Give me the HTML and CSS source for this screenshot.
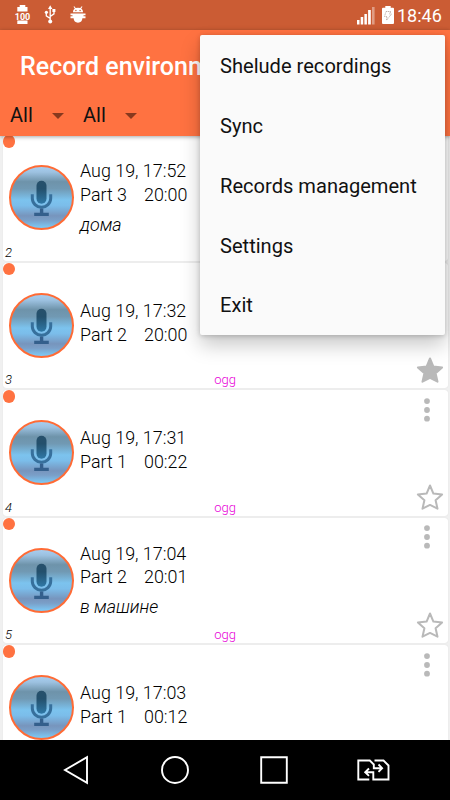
FILE: index.html
```html
<!DOCTYPE html>
<html lang="en">
<head>
    <meta charset="UTF-8">
    <meta name="viewport" content="width=device-width, initial-scale=1.0">
    <title>Record environment</title>
    <link rel="stylesheet" href="styles.css">
</head>
<body>

    <!-- Shared icons -->
    <svg class="defs" width="0" height="0">
        <defs>
            <linearGradient id="sky" x1="0" y1="0" x2="0" y2="1">
                <stop offset="0" stop-color="#a9d0f3"/>
                <stop offset="0.1" stop-color="#9cc1e0"/>
                <stop offset="0.25" stop-color="#6e93aa"/>
                <stop offset="0.36" stop-color="#7199b3"/>
                <stop offset="0.54" stop-color="#7cc3ee"/>
                <stop offset="0.63" stop-color="#7bbdea"/>
                <stop offset="0.79" stop-color="#7795bd"/>
                <stop offset="0.86" stop-color="#7a9fc8"/>
                <stop offset="0.97" stop-color="#7cc6f2"/>
            </linearGradient>
            <linearGradient id="micBody" x1="0" y1="0" x2="0" y2="1">
                <stop offset="0" stop-color="#27506b"/>
                <stop offset="0.35" stop-color="#24506c"/>
                <stop offset="1" stop-color="#2f78a6"/>
            </linearGradient>
            <symbol id="mic" viewBox="0 0 65 65">
                <circle cx="32.5" cy="32.5" r="31.5" fill="url(#sky)" stroke="#ff6b35" stroke-width="2"/>
                <rect x="27.5" y="15.7" width="10" height="23" rx="5" fill="url(#micBody)"/>
                <path d="M23.3 29.300v4a9.2 9 0 0 0 18.4 0v-4" fill="none" stroke="#37709c" stroke-width="3"/>
                <path d="M30.9 43.5h3.4v4.2h5.5v3.3H25.2v-3.3h5.7z" fill="#345f8c"/>
            </symbol>
            <symbol id="star" viewBox="0 0 28 28">
                <path d="M14 2.5l3.4 8.1 8.7.8-6.5 5.8 1.9 8.5L14 21.9l-7.5 3.8 1.9-8.5-6.5-5.8 8.7-.8z" stroke="#b9b9b9" stroke-width="2" stroke-linejoin="round"/>
            </symbol>
            <symbol id="dots" viewBox="0 0 6 24">
                <circle cx="3" cy="3.1" r="2.9"/>
                <circle cx="3" cy="12" r="2.9"/>
                <circle cx="3" cy="20.7" r="2.9"/>
            </symbol>
        </defs>
    </svg>

    <!-- Status bar -->
    <div class="status-bar">
        <svg class="usb" width="60" height="30" viewBox="0 0 60 30">
            <path d="M19.7 5h5.6v2h2.2v4.5H17.3V7h2.4zM17.3 20.5h10.2V24H17.3z" fill="#fff"/>
            <text class="charge-text" x="14.800" y="19.500">100</text>
            <path d="M50.2 8v13M46.3 12.5v3.3l3.9 2.7M54 10.5v3.3l-3.8 2.7" fill="none" stroke="#fff" stroke-width="1.3"/>
            <path d="M50.2 5.3l2.200 3.600H48zM52.400 9h3v3h-3z" fill="#fff"/>
            <circle cx="46.400" cy="12.300" r="1.600" fill="#fff"/>
            <circle cx="50.200" cy="21.500" r="2" fill="#fff"/>
        </svg>
        <svg class="android" width="16" height="18" viewBox="0 0 16 18">
            <path d="M3 6.300c0-1.700.7-3 1.800-3.800L3.500.8l.8-.5 1.400 1.800a6.500 6.500 0 0 1 4.600 0L11.700.3l.8.5-1.300 1.700C12.300 3.300 13 4.600 13 6.300zM.5 7.500h15v1.800h-2v1h2v2h-3.100A4.800 4.800 0 0 1 8 16.800a4.800 4.800 0 0 1-4.400-4.500H.5v-2h2v-1h-2z" fill="#fff"/>
            <circle cx="5.900" cy="4.500" r=".7" fill="#cb5c34"/>
            <circle cx="10.100" cy="4.500" r=".7" fill="#cb5c34"/>
        </svg>
        <svg class="signal" width="19" height="19" viewBox="0 0 19 19" fill="#fff">
            <path d="M0 14h2.500v4.500H0zM3.700 11h2.500v7.500H3.700zM7.400 8h2.500v10.500H7.400zM11.100 4h2.700v14.500h-2.700z"/>
            <path d="M15 1h2.600v17.500H15z" opacity=".4"/>
        </svg>
        <svg class="battery" width="12" height="18" viewBox="0 0 12 18">
            <path d="M3.300 0h5.400v1.700H11a1 1 0 0 1 1 1V17a1 1 0 0 1-1 1H1a1 1 0 0 1-1-1V2.700a1 1 0 0 1 1-1h2.300z" fill="#fff"/>
            <path d="M4 5.500h4.800L7.500 8h2L4.500 14.300 5 10.500H2.500z" fill="none" stroke="#b9a9a3" stroke-width=".9" stroke-dasharray="1.200 .6"/>
        </svg>
        <span class="clock">18:46</span>
    </div>

    <!-- Header -->
    <div class="header">
        <h1>Record environment</h1>
        <div class="filters">
            <span>All</span>
            <span>All</span>
        </div>
    </div>

    <!-- Records -->
    <div class="records">
        <div class="card">
            <span class="mark"></span>
            <svg class="mic"><use href="#mic"/></svg>
            <div class="info has-note">
                <p>Aug 19, 17:52</p>
                <p><span class="part">Part 3</span>20:00</p>
                <p class="note">дома</p>
            </div>
            <span class="number">2</span>
            <svg class="dots"><use href="#dots"/></svg>
            <svg class="star"><use href="#star"/></svg>
        </div>
        <div class="card">
            <span class="mark"></span>
            <svg class="mic"><use href="#mic"/></svg>
            <div class="info">
                <p>Aug 19, 17:32</p>
                <p><span class="part">Part 2</span>20:00</p>
            </div>
            <span class="number">3</span>
            <span class="format">ogg</span>
            <svg class="dots"><use href="#dots"/></svg>
            <svg class="star full"><use href="#star"/></svg>
        </div>
        <div class="card">
            <span class="mark"></span>
            <svg class="mic"><use href="#mic"/></svg>
            <div class="info">
                <p>Aug 19, 17:31</p>
                <p><span class="part">Part 1</span>00:22</p>
            </div>
            <span class="number">4</span>
            <span class="format">ogg</span>
            <svg class="dots"><use href="#dots"/></svg>
            <svg class="star"><use href="#star"/></svg>
        </div>
        <div class="card">
            <span class="mark"></span>
            <svg class="mic"><use href="#mic"/></svg>
            <div class="info has-note">
                <p>Aug 19, 17:04</p>
                <p><span class="part">Part 2</span>20:01</p>
                <p class="note">в машине</p>
            </div>
            <span class="number">5</span>
            <span class="format">ogg</span>
            <svg class="dots"><use href="#dots"/></svg>
            <svg class="star"><use href="#star"/></svg>
        </div>
        <div class="card">
            <span class="mark"></span>
            <svg class="mic"><use href="#mic"/></svg>
            <div class="info">
                <p>Aug 19, 17:03</p>
                <p><span class="part">Part 1</span>00:12</p>
            </div>
            <svg class="dots"><use href="#dots"/></svg>
        </div>
    </div>

    <!-- Navigation bar -->
    <div class="nav-bar">
        <svg viewBox="0 0 36 36"><path d="M29 5.200v25.600L7 18z"/></svg>
        <svg viewBox="0 0 36 36"><circle cx="18" cy="18" r="13"/></svg>
        <svg viewBox="0 0 36 36"><path d="M5.200 5.200h25.600v25.600H5.200z"/></svg>
        <svg viewBox="0 0 36 36">
            <path d="M14.300 27.500H3.300V8.500h11.500l4 4v3.700h8M19.500 8.500h9l5 5v14H18.300v-7.300H10.500M23.500 12.500l3.600 3.700-3.600 3.600M14 16.500l-3.800 3.700 3.800 3.700"/>
        </svg>
    </div>

    <!-- Overflow menu -->
    <div class="menu">
        <a>Shelude recordings</a>
        <a>Sync</a>
        <a>Records management</a>
        <a>Settings</a>
        <a>Exit</a>
    </div>

</body>
</html>
```
FILE: styles.css
```css
* {
    margin: 0;
    padding: 0;
    box-sizing: border-box;
}

body {
    font-family: Roboto, sans-serif;
    width: 450px;
    height: 800px;
    display: flex;
    flex-direction: column;
    background-color: #eeeeee;
    overflow: hidden;
    position: relative;
}

.defs {
    position: absolute;
}

/* Status bar */
.status-bar {
    height: 30px;
    flex: none;
    display: flex;
    align-items: center;
    background-color: #cb5c34;
    color: white;
}

.usb {
    flex: none;
}

.charge-text {
    font-size: 9px;
    font-weight: 700;
    fill: white;
}

.android {
    margin-left: 9.5px;
}

.signal {
    margin-left: auto;
}

.battery {
    margin: 0 3px 0 6px;
}

.clock {
    width: 53px;
    font-size: 18px;
    line-height: 30px;
    padding-top: 2px;
}

/* Header */
.header {
    height: 106px;
    flex: none;
    background-color: #ff7241;
    box-shadow: 0 1px 4px rgba(0, 0, 0, 0.35);
    z-index: 1;
}

.header h1 {
    width: 200px;
    height: 65px;
    padding: 4px 0 0 20px;
    overflow: hidden;
    font-size: 25px;
    font-weight: 500;
    line-height: 65px;
    color: white;
    white-space: nowrap;
}

.filters {
    display: flex;
    padding-left: 10px;
}

.filters span {
    display: flex;
    align-items: center;
    justify-content: space-between;
    width: 54px;
    margin-right: 19px;
    font-size: 20px;
    line-height: 41px;
    color: #111111;
}

.filters span::after {
    content: "";
    border: 6px solid transparent;
    border-top-color: #87391e;
    border-bottom: 0;
}

/* Records */
.records {
    flex: 1;
    min-height: 0;
    overflow: hidden;
    padding: 0 2.5px;
    background-color: #f0f0f0;
}

/* every child shares the single cell and is aligned inside it */
.card {
    display: grid;
    height: 125.5px;
    margin-bottom: 2px;
    background-color: white;
    border-radius: 3px;
    box-shadow: 0 0 1px rgba(0, 0, 0, 0.15);
}

/* the list is scrolled slightly under the header */
.card:first-child {
    margin-top: -1px;
}

.card > * {
    grid-area: 1 / 1;
}

.mark {
    width: 12.5px;
    height: 12.5px;
    border-radius: 50%;
    background-color: #ff7241;
}

.mic {
    width: 65px;
    height: 65px;
    align-self: center;
    margin-left: 6.5px;
}

.info {
    align-self: center;
    margin-left: 77.5px;
    padding-bottom: 5.5px;
    font-size: 17.9px;
    font-weight: 300;
    line-height: 23.7px;
    color: #000000;
}

.info.has-note {
    padding-bottom: 0;
}

.part {
    display: inline-block;
    width: 64px;
}

.note {
    margin-top: 6px;
    font-style: italic;
}

.number,
.format {
    align-self: end;
    font-size: 13px;
    font-weight: 300;
    line-height: 16px;
}

.number {
    margin-left: 2.5px;
    font-style: italic;
}

.format {
    justify-self: center;
    color: #e800d8;
}

.dots {
    width: 6px;
    height: 24px;
    justify-self: end;
    margin: 7.5px 17.5px 0 0;
    fill: #b9b9b9;
}

.star {
    width: 28px;
    height: 28px;
    place-self: end;
    margin: 0 3.5px 4.5px 0;
    fill: none;
}

.star.full {
    fill: #b9b9b9;
}

/* Navigation bar */
.nav-bar {
    height: 60px;
    flex: none;
    display: flex;
    align-items: center;
    padding-left: 58px;
    gap: 63px;
    background-color: #000000;
}

.nav-bar svg {
    width: 36px;
    height: 36px;
    flex: none;
    fill: none;
    stroke: white;
    stroke-width: 1.9;
}

/* Overflow menu */
.menu {
    position: absolute;
    top: 35px;
    left: 200px;
    width: 245px;
    height: 300px;
    padding-top: 1px;
    background-color: #fafafa;
    border-radius: 2px;
    box-shadow: 0 10px 20px rgba(0, 0, 0, 0.22), 0 1px 5px rgba(0, 0, 0, 0.2);
    z-index: 2;
}

.menu a {
    display: block;
    padding-left: 20px;
    font-size: 20.1px;
    line-height: 60px;
    color: #111111;
}

.menu a:last-child {
    line-height: 59px;
}
```
